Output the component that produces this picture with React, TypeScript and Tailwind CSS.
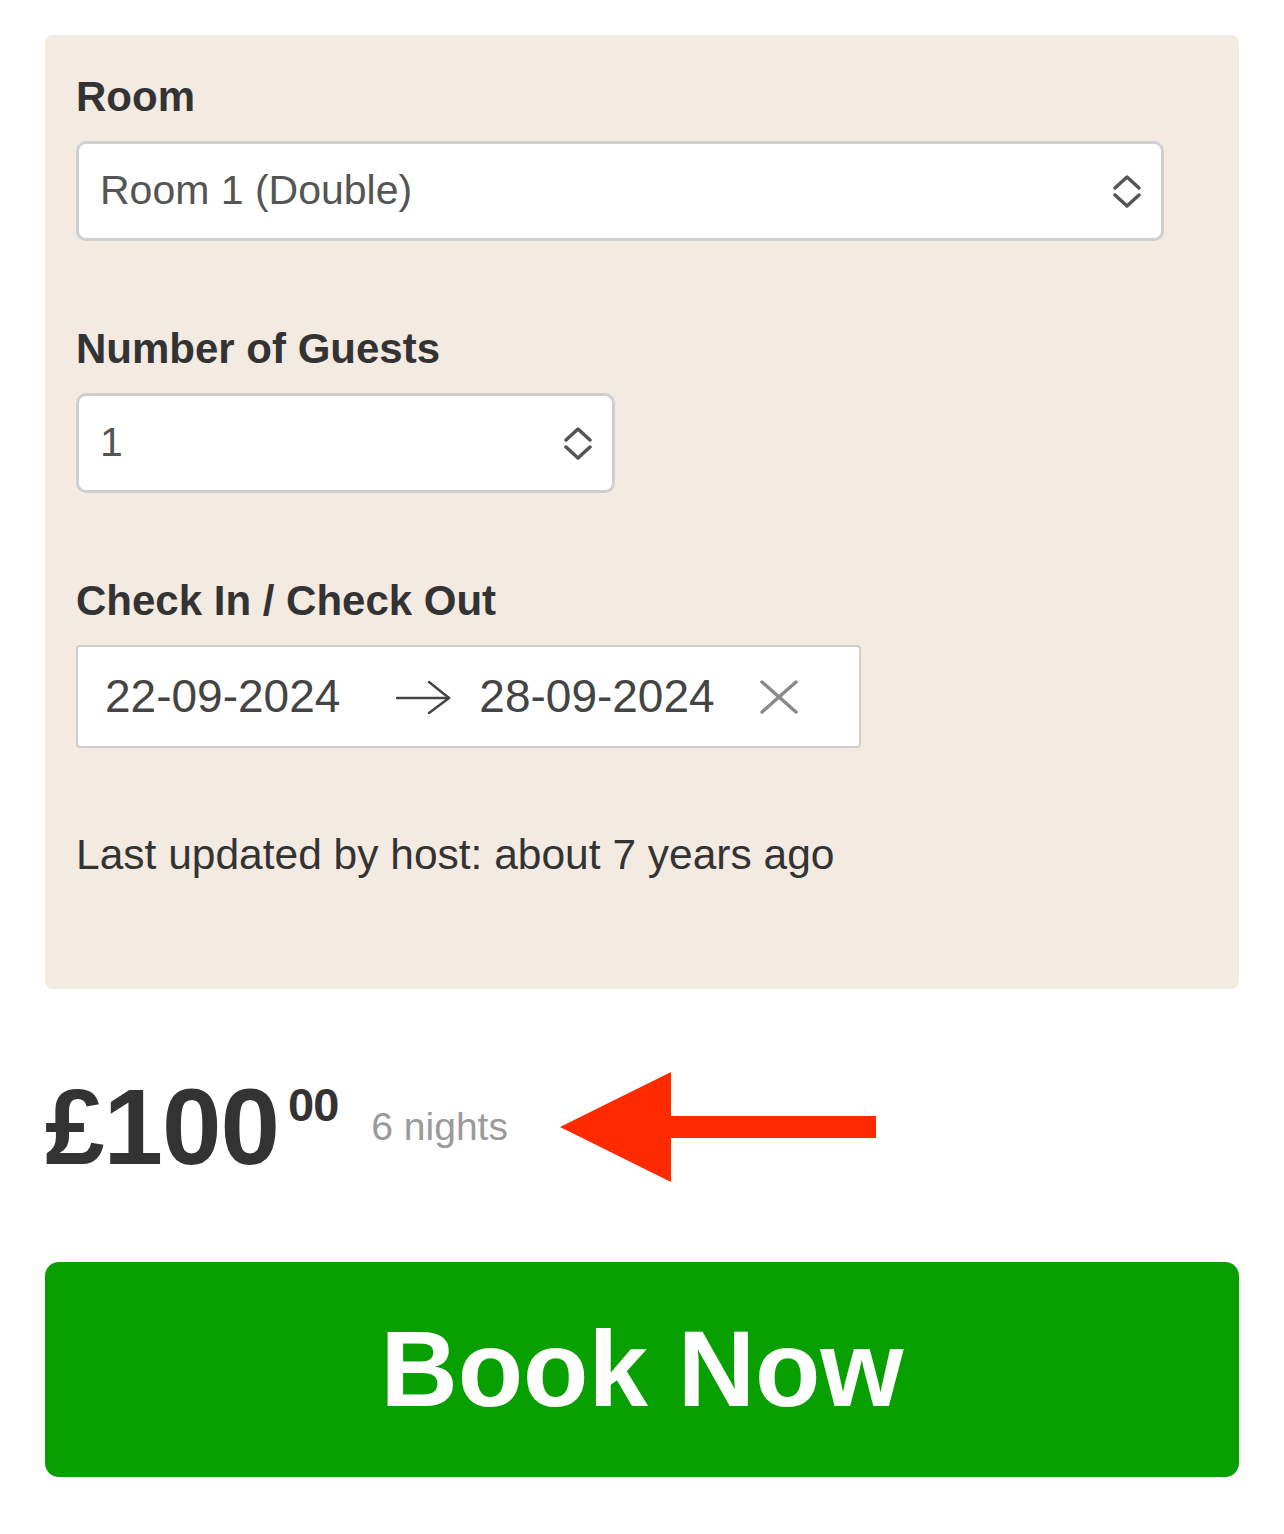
import React from 'react'

const font = { fontFamily: '"Helvetica Neue", Helvetica, "Liberation Sans", Arial, sans-serif' }

function Chevrons() {
  return (
    <svg width="28" height="33" viewBox="0 0 28 33" fill="none" stroke="#555" strokeWidth="3.5" strokeLinecap="round" strokeLinejoin="round">
      <path d="M2 13 L14 2 L26 13" />
      <path d="M2 20 L14 31 L26 20" />
    </svg>
  )
}

function Label({ children }: { children: React.ReactNode }) {
  return <div className="text-[42px] leading-[50px] font-bold text-[#333]">{children}</div>
}

function SelectBox({ value, width }: { value: string; width: string }) {
  return (
    <div className={`${width} mt-[19px] h-[100px] flex items-center justify-between rounded-[10px] border-[3px] border-[#cfcfcf] bg-white pl-[21px] pr-[20px]`}>
      <span className="text-[41px] text-[#555]">{value}</span>
      <Chevrons />
    </div>
  )
}

export default function App() {
  return (
    <div className="min-h-[1534px] bg-white px-[45px] pt-[35px]" style={font}>
      <div className="rounded-[8px] bg-[#f3eae1] pl-[31px] pr-[76px] pt-[37px] pb-[109px]">
        <Label>Room</Label>
        <SelectBox value="Room 1 (Double)" width="w-[1088px]" />

        <div className="mt-[83px]">
          <Label>Number of Guests</Label>
        </div>
        <SelectBox value="1" width="w-[539px]" />

        <div className="mt-[83px]">
          <Label>Check In / Check Out</Label>
        </div>
        <div className="mt-[19px] w-[785px] h-[103px] flex items-center rounded-[4px] border-[2px] border-[#cfcfcf] bg-white pl-[27px]">
          <span className="text-[46px] text-[#444]">22-09-2024</span>
          <svg className="ml-[56px]" width="55" height="34" viewBox="0 0 55 34" fill="none" stroke="#444" strokeWidth="2.5" strokeLinecap="round" strokeLinejoin="round">
            <path d="M1 18 H53" />
            <path d="M33 2 L53 18 L33 33" />
          </svg>
          <span className="ml-[28px] text-[46px] text-[#444]">28-09-2024</span>
          <svg className="ml-[45px]" width="38" height="34" viewBox="0 0 38 34" fill="none" stroke="#8a8a8a" strokeWidth="3.5" strokeLinecap="round">
            <path d="M2 2 L36 32" />
            <path d="M36 2 L2 32" />
          </svg>
        </div>

        <div className="mt-[82px] text-[42.5px] leading-[50px] text-[#333]">
          Last updated by host: about 7 years ago
        </div>
      </div>

      <div className="mt-[85px] h-[106px] flex items-center">
        <div className="flex items-start font-bold text-[#333]">
          <span className="text-[107px] leading-[106px] tracking-[-1px]">£100</span>
          <span className="ml-[9px] mt-[7px] text-[47px] leading-[47px] tracking-[-1px]">00</span>
        </div>
        <span className="ml-[33px] text-[39px] leading-[50px] text-[#9a9a9a]">6 nights</span>
        <svg className="ml-[52px]" width="316" height="110" viewBox="0 0 316 110">
          <polygon points="0,55 111,0 111,44 316,44 316,66 111,66 111,110" fill="#ff2a00" />
        </svg>
      </div>

      <button className="mt-[82px] w-full h-[215px] rounded-[14px] bg-[#07a000] text-white text-[107px] font-bold flex items-center justify-center">
        Book Now
      </button>
    </div>
  )
}
